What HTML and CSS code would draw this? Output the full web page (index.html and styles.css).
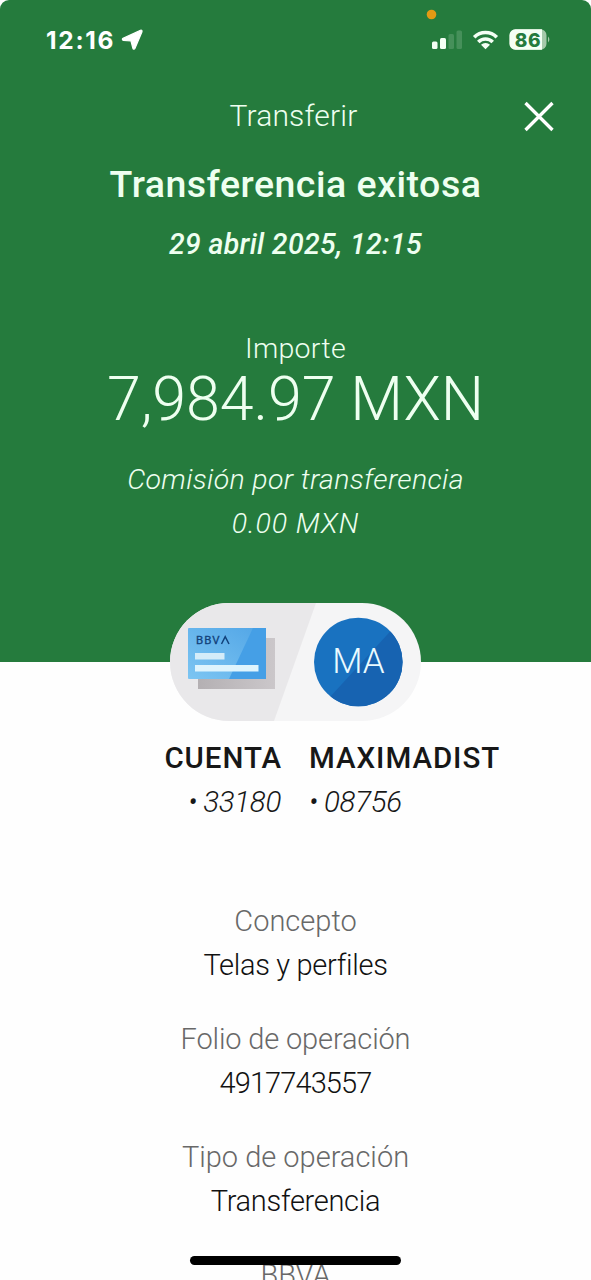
FILE: index.html
```
<!DOCTYPE html>
<html lang="es">
<head>
<meta charset="utf-8">
<title>Transferir</title>
<link rel="stylesheet" href="styles.css">
</head>
<body>
<main class="screen">
  <header class="hero">
    <div class="status">
      <div class="clock"><span class="time">12:16</span>
        <svg class="arrow" viewBox="0 0 22 21"><path d="M19.500 1.200 2 9.400c-1 .5-.8 1.700.4 1.900l7.600.7 1.900 7.300c.3 1.100 1.500 1.200 2 .2l7-16.600c.5-1.200-.3-2.200-1.400-1.700z" fill="#fff" stroke="#fff" stroke-width="1.200" stroke-linejoin="round"/></svg>
      </div>
      <svg class="signal" viewBox="0 0 120 50">
        <circle cx="3.500" cy="6.500" r="4.800" fill="#e29a14"/>
        <g fill="#f4fff4">
          <rect x="4" y="33.500" width="5.500" height="7.500" rx="1.500"/>
          <rect x="12" y="30" width="6" height="11" rx="1.500"/>
        </g>
        <g fill="#46905a">
          <rect x="20.500" y="26" width="5.500" height="15" rx="1.500"/>
          <rect x="28.500" y="22.500" width="5.500" height="18.500" rx="1.500"/>
        </g>
        <g fill="none" stroke="#f4fff4" stroke-width="3.600">
          <path d="M46.200 29.200a16 16 0 0 1 22.600 0"/>
          <path d="M50.300 34a10.200 10.200 0 0 1 14.400 0"/>
        </g>
        <path d="M57.500 41.200l-4.500-4.400a6.300 6.300 0 0 1 9 0z" fill="#f4fff4"/>
        <path d="M87.500 21.200h25a6 6 0 0 1 6 6v8.600a6 6 0 0 1-6 6h-25a6 6 0 0 1-6-6v-8.600a6 6 0 0 1 6-6z" fill="#a5c9aa"/>
        <path d="M87.500 21.200h26.500v20.600h-26.500a6 6 0 0 1-6-6v-8.600a6 6 0 0 1 6-6z" fill="#f4fff4"/>
        <path d="M120 28.500q2.800 3 0 6z" fill="#a5c9aa"/>
        <text x="86.800" y="38.600" class="battery">86</text>
      </svg>
    </div>
    <div class="topbar">
      <h1 class="name">Transferir</h1>
      <svg class="close" viewBox="0 0 32 32"><path d="M2.500 3 29.500 30M29.500 3 2.500 30" stroke="#fff" stroke-width="3.300"/></svg>
    </div>
    <h2 class="title">Transferencia exitosa</h2>
    <p class="date">29 abril 2025, 12:15</p>
    <p class="label">Importe</p>
    <p class="amount">7,984.97 MXN</p>
    <p class="fee">Comisión por transferencia</p>
    <p class="fee fee-value">0.00 MXN</p>
  </header>
  <section class="parties">
    <svg class="pill" viewBox="0 0 252 118">
      <defs>
        <clipPath id="capsule"><rect width="251" height="118" rx="59"/></clipPath>
        <clipPath id="disc"><circle cx="188.300" cy="59" r="44.300"/></clipPath>
        <linearGradient id="card" x1="0" y1="1" x2="1" y2="0"><stop offset="0" stop-color="#7cc5f2"/><stop offset="1" stop-color="#51a5e6"/></linearGradient>
        <linearGradient id="shade" x1="0" y1="0" x2="1" y2="0"><stop offset="0" stop-color="#b4b0b3"/><stop offset="1" stop-color="#cbc7ca"/></linearGradient>
      </defs>
      <g clip-path="url(#capsule)">
        <rect width="252" height="118" fill="#f5f5f6"/>
        <path d="M0 0H146L104 118H0z" fill="#e9e8ea"/>
      </g>
      <rect x="28" y="35" width="77" height="51" fill="url(#shade)"/>
      <rect x="18" y="25" width="78" height="51" rx="1" fill="url(#card)"/>
      <path d="M83 25h13v51H59z" fill="#459fe6"/>
      <path d="M25 50h29.500v6.500H25z" fill="#d4ecf9"/>
      <path d="M25 62h63.500v6.500H25z" fill="#def4fd"/>
      <text x="26" y="41.200" class="bank">BBV</text>
      <path d="M51.500 41 55.200 33.600 59 41" fill="none" stroke="#12427b" stroke-width="1.500"/>
      <circle cx="188.300" cy="59" r="44.300" fill="#1972c0"/>
      <path clip-path="url(#disc)" d="M228 20 160 94v18h90V20z" fill="#1763b1"/>
      <text x="188.300" y="70" class="initials">MA</text>
    </svg>
    <div class="accounts">
      <div class="from"><p class="owner">CUENTA</p><p class="number"><span class="dot">•</span>33180</p></div>
      <div class="to"><p class="owner">MAXIMADIST</p><p class="number"><span class="dot">•</span>08756</p></div>
    </div>
  </section>
  <dl class="details">
    <div class="item"><dt>Concepto</dt><dd class="text">Telas y perfiles</dd></div>
    <div class="item"><dt class="tight">Folio de operación</dt><dd class="digits">4917743557</dd></div>
    <div class="item"><dt>Tipo de operación</dt><dd class="text">Transferencia</dd></div>
    <div class="item"><dt>BBVA</dt></div>
  </dl>
  <div class="home"></div>
</main>
</body>
</html>
```

FILE: styles.css
```
* { box-sizing: border-box; margin: 0; padding: 0; }
body { background: #fff; font-family: Roboto, "Liberation Sans", sans-serif; }
.screen { position: relative; width: 591px; height: 1280px; overflow: hidden; background: #fefefe; }
.hero { height: 662px; background: #257b3d; color: #eefff0; text-align: center; border-radius: 9px 9px 0 0; }
.status { display: flex; justify-content: space-between; height: 94px; padding: 8px 35px 0 46px; }
.clock { display: flex; gap: 6px; height: 48px; padding-top: 17px; }
.time { font: 700 24.500px/30px Inter, sans-serif; letter-spacing: 1.700px; color: #fff; }
.arrow { width: 22px; height: 21px; margin-top: 4px; }
.signal { flex: none; width: 120px; height: 50px; margin-right: 8px; overflow: visible; }
.battery { font: 800 19px Inter, sans-serif; fill: #257b3d; letter-spacing: .6px; }
.topbar { display: grid; grid-template-columns: 71px 1fr 71px; align-items: center; height: 44px; }
.name { grid-column: 2; font-weight: 300; font-size: 30px; line-height: 44px; letter-spacing: .2px; margin-right: 4px; }
.close { grid-column: 3; width: 32px; height: 32px; margin-left: 3px; }
.title { margin-top: 24px; font-weight: 500; font-size: 37.500px; line-height: 44px; letter-spacing: .5px; }
.date { margin-top: 17px; font-style: italic; font-weight: 500; font-size: 28.500px; line-height: 44px; letter-spacing: .35px; }
.label { margin-top: 65px; font-weight: 300; font-size: 28.500px; line-height: 34px; letter-spacing: .3px; }
.amount { margin-top: 1px; font-weight: 300; font-size: 61px; line-height: 64px; letter-spacing: -.1px; }
.fee { margin-top: 27px; font-style: italic; font-weight: 300; font-size: 28.500px; line-height: 44px; letter-spacing: .35px; }
.fee-value { margin-top: 0; letter-spacing: .9px; }
.parties { margin-top: -59px; height: 296px; color: #171717; }
.pill { position: relative; display: block; width: 252px; height: 118px; margin-left: 170px; }
.bank { font: 400 11.500px Roboto, sans-serif; fill: #12427b; stroke: #12427b; stroke-width: .3px; letter-spacing: 1px; }
.initials { font: 300 35px Roboto, sans-serif; fill: #eafaff; text-anchor: middle; letter-spacing: -.2px; }
.accounts { display: grid; grid-template-columns: 281px 1fr; column-gap: 28px; margin-top: 15px; }
.from { text-align: right; }
.owner { font-weight: 500; font-size: 29.500px; line-height: 44px; letter-spacing: .95px; white-space: nowrap; }
.from .owner { margin-right: -1px; }
.number { font-style: italic; font-weight: 300; font-size: 29.500px; line-height: 44px; letter-spacing: -.3px; }
.dot { display: inline-block; width: 15px; text-align: left; font-size: 29px; line-height: 20px; }
.details { text-align: center; font-weight: 300; font-size: 29px; line-height: 44px; }
.item { margin-bottom: 30px; }
.item dt { color: #686868; }
.item .tight { letter-spacing: -.15px; }
.item dd { color: #111; }
.item .text { letter-spacing: -.3px; }
.item .digits { letter-spacing: -.9px; }
.home { position: absolute; left: 190px; top: 1256px; width: 211px; height: 9px; border-radius: 5px; background: #000; }
```
